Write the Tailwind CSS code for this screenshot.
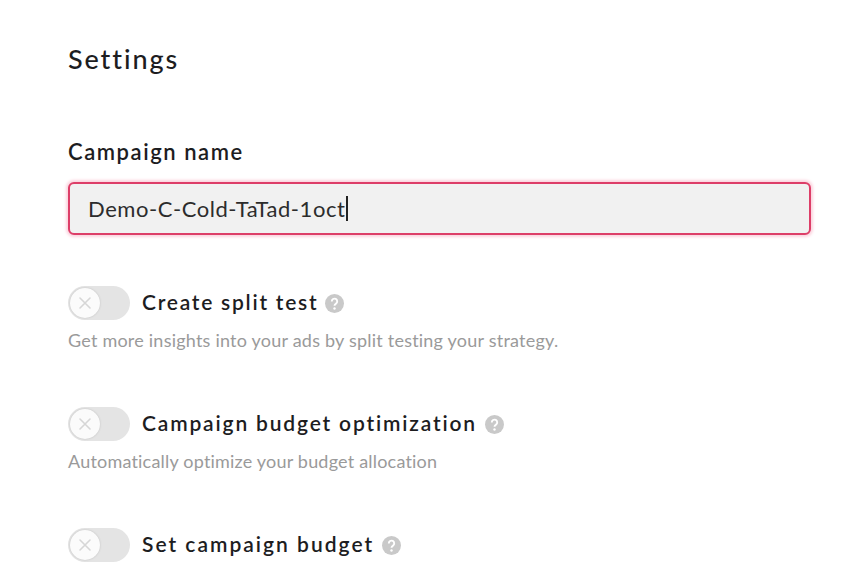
<!doctype html>
<html><head><meta charset="utf-8"><script src="https://cdn.jsdelivr.net/npm/@tailwindcss/browser@4"></script></head>
<body class="bg-white">
<main class="w-[860px] h-[582px] overflow-hidden pl-[68px] pr-[49px] pt-[43px] font-['Lato','Liberation_Sans',sans-serif] text-[#1d1d1f]">
  <h1 class="text-[27px] leading-[32px] font-medium tracking-[1.9px]">Settings</h1>
  <h2 class="mt-[64px] text-[22px] leading-[26px] font-semibold tracking-[1.55px]">Campaign name</h2>
  <div class="mt-[17px] h-[53px] rounded-[6px] border-2 border-[#dd3e68] bg-[#f1f1f1] shadow-[0_0_3px_2px_#fbd3de] pl-[18px] flex items-center text-[22px] tracking-[0.55px] text-[#2c2c2c]"><span>Demo-C-Cold-TaTad-1oct</span><span class="ml-[1px] w-[2px] h-[25px] bg-[#222]"></span></div>

  <section class="mt-[50px]">
    <div class="flex items-center h-[36px]">
      <div class="w-[62px] h-[34px] rounded-full bg-[#e4e4e4] flex items-center pl-[2px]"><div class="w-[30px] h-[30px] rounded-full bg-[#fbfbfb] shadow-[0_0_2px_#bbbbbb] flex items-center justify-center"><svg width="16" height="16" viewBox="0 0 16 16" fill="none" stroke="#d6d6d6" stroke-width="1.6" stroke-linecap="round"><path d="M3 3l10 10M13 3L3 13"/></svg></div></div>
      <span class="ml-[12px] pb-[2px] text-[21px] font-semibold tracking-[1.75px]">Create split test</span>
      <svg class="ml-[7px] mt-[1px]" width="19" height="19" viewBox="0 0 19 19"><circle cx="9.5" cy="9.5" r="9.5" fill="#c9c9c9"/><path d="M6.8 7.4a2.7 2.7 0 1 1 4.2 2.2c-1 .7-1.5 1.1-1.5 2.2" fill="none" stroke="#fff" stroke-width="1.9"/><circle cx="9.5" cy="14.5" r="1.2" fill="#fff"/></svg>
    </div>
    <p class="mt-[7px] text-[18px] leading-[24px] tracking-[0.22px] text-[#9a9a9a]">Get more insights into your ads by split testing your strategy.</p>
  </section>

  <section class="mt-[54px]">
    <div class="flex items-center h-[36px]">
      <div class="w-[62px] h-[34px] rounded-full bg-[#e4e4e4] flex items-center pl-[2px]"><div class="w-[30px] h-[30px] rounded-full bg-[#fbfbfb] shadow-[0_0_2px_#bbbbbb] flex items-center justify-center"><svg width="16" height="16" viewBox="0 0 16 16" fill="none" stroke="#d6d6d6" stroke-width="1.6" stroke-linecap="round"><path d="M3 3l10 10M13 3L3 13"/></svg></div></div>
      <span class="ml-[12px] pb-[2px] text-[21px] font-semibold tracking-[1.83px]">Campaign budget optimization</span>
      <svg class="ml-[8px] mt-[1px]" width="19" height="19" viewBox="0 0 19 19"><circle cx="9.5" cy="9.5" r="9.5" fill="#c9c9c9"/><path d="M6.8 7.4a2.7 2.7 0 1 1 4.2 2.2c-1 .7-1.5 1.1-1.5 2.2" fill="none" stroke="#fff" stroke-width="1.9"/><circle cx="9.5" cy="14.5" r="1.2" fill="#fff"/></svg>
    </div>
    <p class="mt-[7px] text-[18px] leading-[24px] tracking-[0.2px] text-[#9a9a9a]">Automatically optimize your budget allocation</p>
  </section>

  <section class="mt-[54px]">
    <div class="flex items-center h-[36px]">
      <div class="w-[62px] h-[34px] rounded-full bg-[#e4e4e4] flex items-center pl-[2px]"><div class="w-[30px] h-[30px] rounded-full bg-[#fbfbfb] shadow-[0_0_2px_#bbbbbb] flex items-center justify-center"><svg width="16" height="16" viewBox="0 0 16 16" fill="none" stroke="#d6d6d6" stroke-width="1.6" stroke-linecap="round"><path d="M3 3l10 10M13 3L3 13"/></svg></div></div>
      <span class="ml-[12px] pb-[2px] text-[21px] font-semibold tracking-[2px]">Set campaign budget</span>
      <svg class="ml-[8px] mt-[1px]" width="19" height="19" viewBox="0 0 19 19"><circle cx="9.5" cy="9.5" r="9.5" fill="#c9c9c9"/><path d="M6.8 7.4a2.7 2.7 0 1 1 4.2 2.2c-1 .7-1.5 1.1-1.5 2.2" fill="none" stroke="#fff" stroke-width="1.9"/><circle cx="9.5" cy="14.5" r="1.2" fill="#fff"/></svg>
    </div>
  </section>
</main>
</body></html>
